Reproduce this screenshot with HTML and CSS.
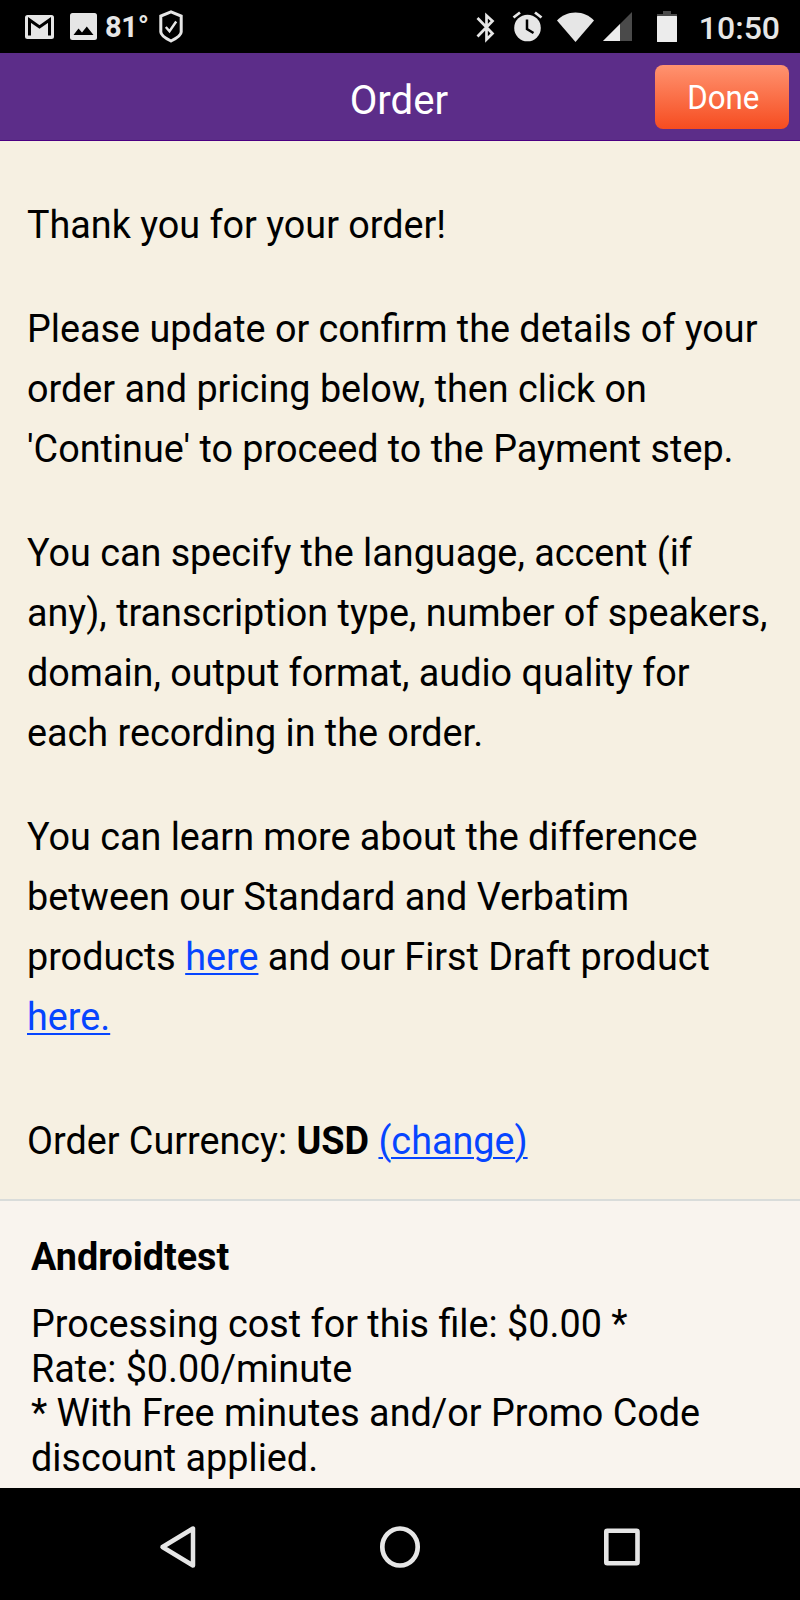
FILE: index.html
```
<!DOCTYPE html>
<html lang="en">
<head>
<meta charset="UTF-8">
<meta name="viewport" content="width=device-width, initial-scale=1.0">
<title>Order</title>
<link rel="stylesheet" href="styles.css">
</head>
<body>
<div class="status-bar">
  <div class="status-left">
    <svg class="icon-mail" width="29" height="24" viewBox="0 0 29 24">
      <rect width="29" height="24" rx="2.5" fill="#e6e6e6"/>
      <path d="M4.5 20.5V5L14.5 12L24.5 5V20.5" fill="none" stroke="#000" stroke-width="3"/>
    </svg>
    <svg class="icon-image" width="27" height="27" viewBox="0 0 27 27">
      <rect width="27" height="27" rx="2.5" fill="#e6e6e6"/>
      <path d="M3.5 22L8.5 15.5L12 19.5L16.8 13.5L23.5 22Z" fill="#000"/>
    </svg>
    <span class="temp">81°</span>
    <svg class="icon-shield" width="24" height="33" viewBox="0 0 24 33">
      <path d="M12 1.8L22.2 6V22C22.2 25.5 17 28.5 12 31C7 28.5 1.8 25.5 1.8 22V6Z" fill="none" stroke="#e6e6e6" stroke-width="3"/>
      <path d="M6.8 17L10.5 21.3L17.2 11.5" fill="none" stroke="#e6e6e6" stroke-width="2.4"/>
    </svg>
  </div>
  <div class="status-right">
    <svg class="icon-bluetooth" width="20" height="31" viewBox="0 0 20 31">
      <path d="M1.5 6L16.5 21.5L10.5 27.5V3.5L16.5 9L1.5 24.5" fill="none" stroke="#e6e6e6" stroke-width="2.7"/>
    </svg>
    <svg class="icon-alarm" width="31" height="31" viewBox="0 0 31 31">
      <circle cx="15.5" cy="17" r="13.3" fill="#e6e6e6"/>
      <path d="M1.5 6.5L8 1.5M29.5 6.5L23 1.5" fill="none" stroke="#e6e6e6" stroke-width="2.8"/>
      <path d="M15 8.5V18L21.5 22" fill="none" stroke="#000" stroke-width="2.5"/>
    </svg>
    <svg class="icon-wifi" width="37" height="30" viewBox="0 0 37 30">
      <path d="M0 8.5C4.5 3.5 11 0.5 18.5 0.5S32.5 3.5 37 8.5L18.5 30Z" fill="#e6e6e6"/>
    </svg>
    <svg class="icon-signal" width="29" height="29" viewBox="0 0 29 29">
      <path d="M0 29L29 0V29Z" fill="#4a4a4a"/>
      <path d="M0 29L17 12V29Z" fill="#ececec"/>
    </svg>
    <svg class="icon-battery" width="20" height="31" viewBox="0 0 20 31">
      <path d="M6 0H14V3H20V6H0V3H6Z" fill="#4a4a4a"/>
      <rect y="5" width="20" height="26" rx="0.5" fill="#ececec"/>
    </svg>
    <span class="clock">10:50</span>
  </div>
</div>

<div class="header">
  <h1>Order</h1>
  <button class="done"><span>Done</span></button>
</div>

<div class="content">
  <p>Thank you for your order!</p>
  <p>Please update or confirm the details of your<br>order and pricing below, then click on<br>'Continue' to proceed to the Payment step.</p>
  <p>You can specify the language, accent (if<br>any), transcription type, number of speakers,<br>domain, output format, audio quality for<br>each recording in the order.</p>
  <p>You can learn more about the difference<br>between our Standard and Verbatim<br>products <a href="#">here</a> and our First Draft product<br><a href="#">here.</a></p>
  <p class="currency">Order Currency: <b>USD</b> <a href="#">(change)</a></p>
</div>

<div class="file">
  <h2>Androidtest</h2>
  <p>Processing cost for this file: $0.00 *<br>Rate: $0.00/minute<br>* With Free minutes and/or Promo Code<br>discount applied.</p>
</div>

<div class="nav-bar">
  <svg width="44" height="44" viewBox="0 0 44 44">
    <path d="M6.5 22L37 3.5V40.5Z" fill="none" stroke="#e6e6e6" stroke-width="4.5" stroke-linejoin="round"/>
  </svg>
  <svg width="44" height="44" viewBox="0 0 44 44">
    <ellipse cx="22" cy="22" rx="17.7" ry="18.5" fill="none" stroke="#e6e6e6" stroke-width="4.7"/>
  </svg>
  <svg width="44" height="44" viewBox="0 0 44 44">
    <rect x="6.3" y="5.8" width="31.2" height="32.4" rx="1" fill="none" stroke="#e6e6e6" stroke-width="4.6"/>
  </svg>
</div>
</body>
</html>
```
FILE: styles.css
```
* {
  box-sizing: border-box;
}

body {
  margin: 0;
  width: 800px;
  height: 1600px;
  display: flex;
  flex-direction: column;
  overflow: hidden;
  font-family: Roboto, "Liberation Sans", sans-serif;
  font-size: 39px;
  color: #000;
  background: #f6f0e2;
}

p, h1, h2 {
  margin: 0;
}

/* slightly condensed text */
p, h2 {
  transform: scaleX(0.9677);
  transform-origin: left;
}

.status-bar {
  height: 53px;
  flex: none;
  display: flex;
  justify-content: space-between;
  background: #000;
  color: #e6e6e6;
}

.status-left,
.status-right {
  display: flex;
  align-items: center;
  white-space: nowrap;
}

.status-left {
  padding-left: 25px;
}

.status-right {
  padding-right: 20px;
}

.icon-image {
  margin-left: 16px;
}

.temp {
  margin-left: 8px;
  width: 44px;
  font-size: 29px;
  font-weight: bold;
  letter-spacing: -0.3px;
}

.icon-shield {
  margin-left: 10px;
}

.icon-bluetooth {
  margin-top: 1px;
}

.icon-alarm {
  margin-left: 16px;
}

.icon-wifi {
  margin-left: 14px;
}

.icon-signal {
  margin-left: 9px;
}

.icon-battery {
  margin-left: 25px;
}

.clock {
  margin-left: 22px;
  padding-top: 2px;
  font-size: 32px;
  font-weight: 500;
}

/* purple title bar */
.header {
  height: 88px;
  flex: none;
  display: grid;
  grid-template-columns: 1fr auto 1fr;
  align-items: center;
  padding-right: 11px;
  padding-left: 9px;
  background: #5c2d89;
  border-bottom: 1px solid #4b0082;
}

.header h1 {
  grid-column: 2;
  padding-top: 6px;
  font-size: 41.5px;
  font-weight: 400;
  line-height: 46px;
  color: #fff;
  transform: scaleX(0.9677);
}

.done {
  justify-self: end;
  width: 134px;
  height: 64px;
  padding: 3px 0 0 2px;
  border: 0;
  border-radius: 8px;
  background: linear-gradient(#ff9370, #f64c20);
  color: #fff;
  font-family: inherit;
  font-size: 32.3px;
}

.done span {
  display: inline-block;
  transform: scaleX(0.9677);
}

.content {
  height: 1058px;
  flex: none;
  padding: 53.6px 0 0 26.5px;
  line-height: 60px;
  white-space: nowrap;
}

.content p {
  margin-bottom: 44.2px;
}

.content .currency {
  margin-top: 64px;
}

a {
  color: #0645ff;
  text-decoration: underline;
  text-decoration-thickness: 2px;
  text-underline-offset: 3px;
}

/* recording details */
.file {
  flex: 1;
  padding: 34px 0 0 31px;
  border-top: 2px solid #d9dcda;
  background: #f9f4ee;
  line-height: 44.4px;
  white-space: nowrap;
}

.file h2 {
  margin-bottom: 23px;
  font-size: 39px;
  font-weight: bold;
}

.nav-bar {
  height: 112px;
  flex: none;
  display: flex;
  justify-content: center;
  align-items: center;
  gap: 178px;
  padding-top: 6px;
  background: #000;
}
```
